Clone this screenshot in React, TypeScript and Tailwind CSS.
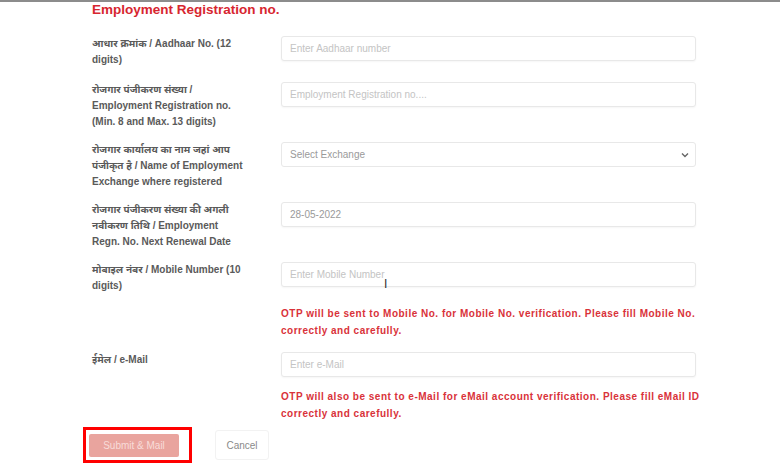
const font = { fontFamily: '"Liberation Sans", "Noto Sans", Arial, sans-serif' };

/*
  Registration form rows: label lines on the left, field on the right.
*/
const rows = [
  {
    lines: ["आधार क्रमांक / Aadhaar No. (12", "digits)"],
    placeholder: "Enter Aadhaar number",
    gap: "mb-[14px]",
  },
  {
    lines: [
      "रोजगार पंजीकरण संख्या /",
      "Employment Registration no.",
      "(Min. 8 and Max. 13 digits)",
    ],
    placeholder: "Employment Registration no....",
    gap: "mb-[12px]",
  },
  {
    lines: [
      "रोजगार कार्यालय का नाम जहां आप",
      "पंजीकृत है / Name of Employment",
      "Exchange where registered",
    ],
    select: true,
    gap: "mb-[12px]",
  },
  {
    lines: [
      "रोजगार पंजीकरण संख्या की अगली",
      "नवीकरण तिथि / Employment",
      "Regn. No. Next Renewal Date",
    ],
    value: "28-05-2022",
    gap: "mb-[12px]",
  },
];

function Field({ placeholder, value }: { placeholder?: string; value?: string }) {
  return (
    <div className="flex h-[25px] w-[415px] items-center rounded-[3px] border border-[#e8e8e8] bg-white pl-[8px] text-[10px] shadow-[0_1px_2px_rgba(0,0,0,0.04)]">
      {value ? (
        <span className="text-[#9a9a9a]">{value}</span>
      ) : (
        <span className="text-[#c4c4c4]">{placeholder}</span>
      )}
    </div>
  );
}

function Label({ lines }: { lines: string[] }) {
  return (
    <p className="w-[170px] text-[10px] font-bold leading-[16px] text-[#5a5a5a]">
      {lines.map((line) => (
        <span key={line} className="block whitespace-nowrap">
          {line}
        </span>
      ))}
    </p>
  );
}

function Note({ children }: { children: React.ReactNode }) {
  return (
    <p className="ml-[189px] w-[424px] text-[10px] font-bold leading-[16.5px] tracking-[0.5px] text-[#d9323a]">
      {children}
    </p>
  );
}

export default function App() {
  return (
    <main className="h-[470px] w-[780px] overflow-hidden bg-white" style={font}>
      <div className="h-[2px] w-full bg-[#8c8c8c]" />

      <div className="pl-[92px]">
        <h1 className="text-[13.5px] font-bold leading-[16px] text-[#d7262f]">
          Employment Registration no.
        </h1>

        <div className="mt-[18px]">
          {rows.map((row) => (
            <div key={row.lines[0]} className={`flex gap-[19px] ${row.gap}`}>
              <Label lines={row.lines} />
              {row.select ? (
                <div className="flex h-[25px] w-[415px] items-center justify-between rounded-[3px] border border-[#e8e8e8] bg-white pl-[8px] pr-[6px] text-[10px] text-[#9a9a9a]">
                  <span>Select Exchange</span>
                  <svg width="8" height="6" viewBox="0 0 8 6">
                    <path d="M1 1.5 L4 4.5 L7 1.5" fill="none" stroke="#666" strokeWidth="1.4" />
                  </svg>
                </div>
              ) : (
                <Field placeholder={row.placeholder} value={row.value} />
              )}
            </div>
          ))}

          {/* MOBILE NUMBER */}
          <div className="relative flex gap-[19px]">
            <Label lines={["मोबाइल नंबर / Mobile Number (10", "digits)"]} />
            <Field placeholder="Enter Mobile Number" />
            <span className="absolute left-[292px] top-[16px] text-[12px] leading-none text-[#333]">
              I
            </span>
          </div>

          <div className="mt-[12px]">
            <Note>
              OTP will be sent to Mobile No. for Mobile No. verification. Please
              fill Mobile No. correctly and carefully.
            </Note>
          </div>

          {/* E-MAIL */}
          <div className="mt-[13px] flex gap-[19px]">
            <Label lines={["ईमेल / e-Mail"]} />
            <Field placeholder="Enter e-Mail" />
          </div>

          <div className="mt-[12px]">
            <Note>
              OTP will also be sent to e-Mail for eMail account verification.
              Please fill eMail ID correctly and carefully.
            </Note>
          </div>

          {/* ACTIONS */}
          <div className="-ml-[9px] mt-[5px] flex items-center gap-[23px]">
            <div className="border-[3px] border-[#ff0000] pb-[3px] pl-[3px] pr-[10px] pt-[2px]">
              <button className="h-[23px] w-[90px] rounded-[2px] bg-[#e9a49e] text-[10px] text-[#f8dcd9]">
                Submit &amp; Mail
              </button>
            </div>
            <button className="h-[30px] w-[54px] rounded-[3px] border border-[#f2f2f2] text-[10px] text-[#8a8a8a]">
              Cancel
            </button>
          </div>
        </div>
      </div>
    </main>
  );
}
